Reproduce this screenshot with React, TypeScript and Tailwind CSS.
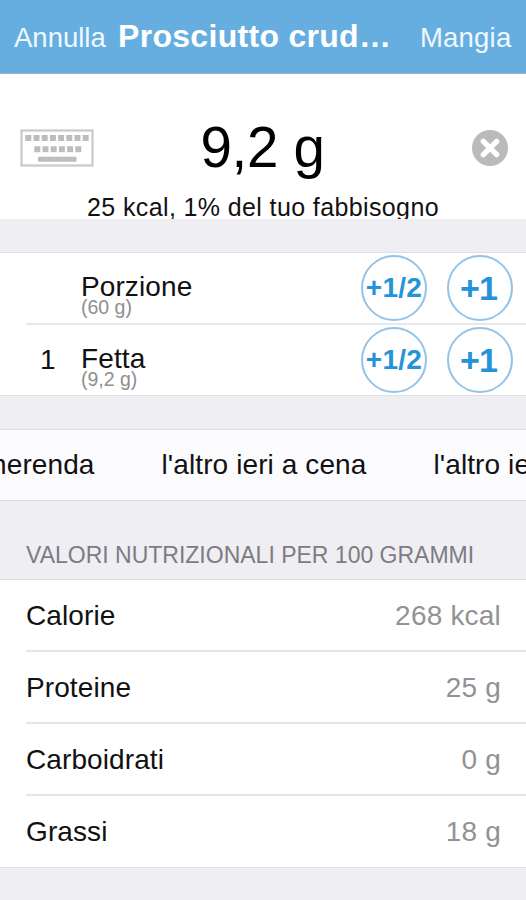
const portions = [
  { count: "", name: "Porzione", weight: "(60 g)" },
  { count: "1", name: "Fetta", weight: "(9,2 g)" },
];

const nutrients = [
  { label: "Calorie", value: "268 kcal" },
  { label: "Proteine", value: "25 g" },
  { label: "Carboidrati", value: "0 g" },
  { label: "Grassi", value: "18 g" },
];

const KeyboardIcon = () => (
  <svg width="74" height="38" viewBox="0 0 74 38" fill="#bdbdbd">
    <rect x="1.5" y="1.5" width="71" height="35" fill="none" stroke="#cbcbcb" strokeWidth="2.3" />
    {[0, 1, 2, 3, 4, 5, 6, 7].map((i) => (
      <rect key={i} x={5.3 + i * 8.2} y="6" width="6" height="6" />
    ))}
    {[0, 1, 2, 3, 4, 5].map((i) => (
      <rect key={i} x={14.3 + i * 8.2} y="17.2" width="6" height="6" />
    ))}
    <rect x="18" y="27.7" width="38.5" height="5" rx="1" />
  </svg>
);

const ClearIcon = () => (
  <svg width="36" height="36" viewBox="0 0 36 36">
    <circle cx="18" cy="18" r="18" fill="#bababa" />
    <path d="M11.3 11.3 L24.7 24.7 M24.7 11.3 L11.3 24.7" stroke="#fff" strokeWidth="5.4" strokeLinecap="round" />
  </svg>
);

const App = () => {
  return (
    <div className="h-[900px] w-[526px] overflow-hidden bg-[#efeef3] font-['Liberation_Sans',Arial,sans-serif] text-[28px] tracking-[0.1px] text-[#111]">
      {/* Navigation bar */}
      <header className="flex h-[74px] items-baseline border-b border-[#9db7ca] bg-[#67aee0] pl-[14px] leading-[73px] whitespace-nowrap text-white">
        <button className="w-[104px] text-left text-[27.5px] tracking-[0px] text-[#f0f8fe]">Annulla</button>
        <h1 className="w-[302px] text-[32px] font-bold tracking-[0.3px]">Prosciutto crud…</h1>
        <button className="text-[27.5px] tracking-[0.2px] text-[#f0f8fe]">Mangia</button>
      </header>

      {/* Quantity */}
      <section className="h-[145px] bg-white pt-[33px]">
        <div className="flex h-[81px] items-center pr-[18px] pl-5">
          <div className="w-[74px]">
            <KeyboardIcon />
          </div>
          <div className="flex-1 pr-[41px] text-center text-[56.5px] leading-[81px] tracking-[-0.3px] text-black">
            9,2 g
          </div>
          <ClearIcon />
        </div>
        <p className="h-[31px] overflow-hidden text-center text-[25px] leading-[38px] tracking-[0.38px]">
          25 kcal, 1% del tuo fabbisogno
        </p>
      </section>

      {/* Portions */}
      <section className="mt-[33px] h-[144px] border-y border-[#dfdfe3] bg-white">
        {portions.map((p, i) => (
          <div key={p.name} className="flex h-[71px] first:h-[72px]">
            <div className="w-[26px]" />
            <div className={i === 0 ? "flex flex-1 border-b-2 border-[#e8e8ea]" : "flex flex-1"}>
              <div className="w-[55px] pt-5 pl-[14px] leading-[29px]">{p.count}</div>
              <div className="flex-1 pt-5">
                <div className="leading-[27px]">{p.name}</div>
                <div className="text-[19.5px] leading-[14px] tracking-[0px] text-[#8e8e90]">{p.weight}</div>
              </div>
              <div className="mt-0.5 mr-[13px] flex gap-5 font-bold text-[#2593d7]">
                <button className="flex size-[66px] items-center justify-center rounded-full border-2 border-[#92c4e9] text-[28px] tracking-[0.3px]">
                  +1/2
                </button>
                <button className="flex size-[66px] items-center justify-center rounded-full border-2 border-[#92c4e9] pr-[3px] text-[34px] tracking-[-1px]">
                  +1
                </button>
              </div>
            </div>
          </div>
        ))}
      </section>

      {/* Meal picker, scrolled sideways */}
      <section className="mt-[33px] flex h-[72px] justify-center gap-[67px] overflow-hidden border-y border-[#dcdce1] bg-[#fcfbfe] pr-[23px] leading-[69px] whitespace-nowrap">
        <span>l'altro ieri a merenda</span>
        <span>l'altro ieri a cena</span>
        <span>l'altro ieri a pranzo</span>
      </section>

      {/* Nutrition facts */}
      <h2 className="h-[78px] pt-[38px] pl-[26px] text-[23px] leading-[32px] tracking-[0px] text-[#7c7c82]">
        VALORI NUTRIZIONALI PER 100 GRAMMI
      </h2>
      <section className="border-y border-[#dfdfe3] bg-white pl-[26px]">
        {nutrients.map((n) => (
          <div key={n.label} className="flex h-[72px] justify-between border-b-2 border-[#e6e6e8] pr-[25px] leading-[72px] last:h-[71px] last:border-b-0">
            <span>{n.label}</span>
            <span className="tracking-[0.2px] text-[#929294]">{n.value}</span>
          </div>
        ))}
      </section>
    </div>
  );
};

export default App;
